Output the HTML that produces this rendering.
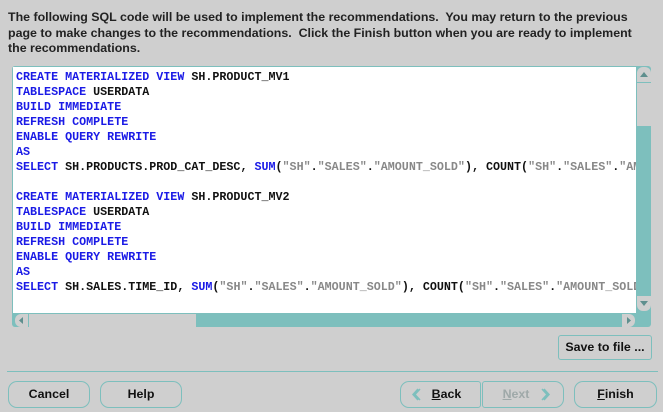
<!DOCTYPE html>
<html><head><style>
body{margin:0;width:663px;height:412px;background:#cfcfcf;font-family:"Liberation Sans",sans-serif;position:relative;overflow:hidden}
.hdr{position:absolute;left:8px;top:10px;width:640px;font-size:12.4px;font-weight:bold;line-height:15.5px;color:#222}
.box{position:absolute;left:12px;top:66px;width:639px;height:261px;background:#7dbfbd;border-radius:3px}
.code{position:absolute;left:13px;top:67px;width:623px;height:246px;background:#fff;overflow:hidden}
pre{margin:0;padding:3px 0 0 3px;font-family:"Liberation Mono",monospace;font-weight:bold;font-size:11.7px;line-height:15px;color:#111}
.k{color:#1a1ae6}.s{color:#888}
.vs{position:absolute;left:637px;top:67px;width:14px;height:246px}
.up{position:absolute;left:0;top:0;width:14px;height:15px;background:#cfcfcf;border-radius:6px 6px 0 0;border-bottom:1px solid #7dbfbd}
.vth{position:absolute;left:0;top:16px;width:14px;height:43px;background:#cfcfcf}
.dn{position:absolute;left:0;top:229px;width:14px;height:15px;background:#cfcfcf;border-radius:0 0 6px 6px}
.hs{position:absolute;left:15px;top:314px;height:13px}
.lf{position:absolute;left:0;top:0;width:13px;height:13px;background:#cfcfcf;border-radius:6px 0 0 6px;border-right:1px solid #7dbfbd}
.hth{position:absolute;left:14px;top:0;width:167px;height:13px;background:#cfcfcf}
.rt{position:absolute;left:607px;top:0;width:13px;height:13px;background:#cfcfcf;border-radius:0 6px 6px 0}
.btn{position:absolute;height:25px;border:1px solid #7dbfbd;border-radius:9px;font-size:12.4px;font-weight:bold;text-align:center;line-height:25px;color:#111}
.sep{position:absolute;left:7px;top:371px;width:651px;height:1px;background:#7dbfbd}
</style></head><body>
<div class="hdr">The following SQL code will be used to implement the recommendations.&nbsp; You may return to the previous page to make changes to the recommendations.&nbsp; Click the Finish button when you are ready to implement the recommendations.</div>
<div class="box"></div>
<div class="code"><pre><span class="k">CREATE MATERIALIZED VIEW</span> SH.PRODUCT_MV1
<span class="k">TABLESPACE</span> USERDATA
<span class="k">BUILD IMMEDIATE</span>
<span class="k">REFRESH COMPLETE</span>
<span class="k">ENABLE QUERY REWRITE</span>
<span class="k">AS</span>
<span class="k">SELECT</span> SH.PRODUCTS.PROD_CAT_DESC, <span class="k">SUM</span>(<span class="s">"SH"</span>.<span class="s">"SALES"</span>.<span class="s">"AMOUNT_SOLD"</span>), COUNT(<span class="s">"SH"</span>.<span class="s">"SALES"</span>.<span class="s">"AMOUNT_SOLD"</span>)

<span class="k">CREATE MATERIALIZED VIEW</span> SH.PRODUCT_MV2
<span class="k">TABLESPACE</span> USERDATA
<span class="k">BUILD IMMEDIATE</span>
<span class="k">REFRESH COMPLETE</span>
<span class="k">ENABLE QUERY REWRITE</span>
<span class="k">AS</span>
<span class="k">SELECT</span> SH.SALES.TIME_ID, <span class="k">SUM</span>(<span class="s">"SH"</span>.<span class="s">"SALES"</span>.<span class="s">"AMOUNT_SOLD"</span>), COUNT(<span class="s">"SH"</span>.<span class="s">"SALES"</span>.<span class="s">"AMOUNT_SOLD"</span>)</pre></div>
<div class="vs"><div class="up"><svg width="14" height="15"><path d="M3 10 L7 5 L11 10Z" fill="#5f8f8e"/></svg></div><div class="vth"></div><div class="dn"><svg width="14" height="15"><path d="M3 5 L7 10 L11 5Z" fill="#5f8f8e"/></svg></div></div>
<div class="hs"><div class="lf"><svg width="13" height="13"><path d="M8 3 L4 6.5 L8 10Z" fill="#5f8f8e"/></svg></div><div class="hth"></div><div class="rt"><svg width="13" height="13"><path d="M5 3 L9 6.5 L5 10Z" fill="#5f8f8e"/></svg></div></div>
<div class="btn" style="left:558px;top:335px;width:92px;height:23px;line-height:23px;border-radius:3px">Save to file ...</div>
<div class="sep"></div>
<div class="btn" style="left:8px;top:381px;width:80px">Cancel</div>
<div class="btn" style="left:100px;top:381px;width:80px">Help</div>
<div class="btn" style="left:400px;top:381px;width:79px;border-radius:9px 3px 3px 9px"><svg style="position:absolute;left:10px;top:6px" width="10" height="13"><path d="M7 1 L2 6.5 L7 12 M9 1 L4 6.5 L9 12" stroke="#7dbfbd" stroke-width="1.5" fill="none"/></svg><span style="margin-left:12px"><u>B</u>ack</span></div>
<div class="btn" style="left:482px;top:381px;width:80px;border-radius:3px 9px 9px 3px;color:#9fa9a9"><span style="margin-right:14px"><u>N</u>ext</span><svg style="position:absolute;right:12px;top:6px" width="10" height="13"><path d="M3 1 L8 6.5 L3 12 M1 1 L6 6.5 L1 12" stroke="#7dbfbd" stroke-width="1.5" fill="none"/></svg></div>
<div class="btn" style="left:574px;top:381px;width:81px"><u>F</u>inish</div>
</body></html>
